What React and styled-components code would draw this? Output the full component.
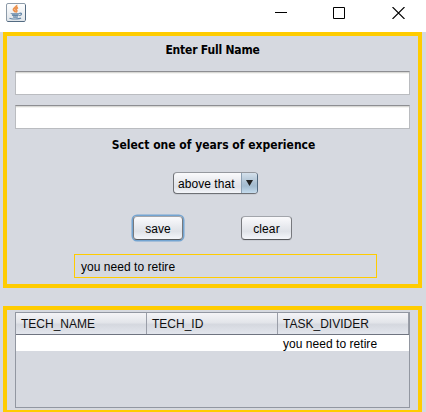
import React from 'react';
import styled, { createGlobalStyle } from 'styled-components';

const Global = createGlobalStyle`
  * { box-sizing: border-box; }
  body { margin: 0; background: #d6d9e0; overflow: hidden; }
`;

const Window = styled.div`
  width: 426px;
  height: 412px;
  overflow: hidden;
  background: #d6d9e0;
  color: #000;
  font: 12px/15px 'Liberation Sans', Arial, sans-serif;
  white-space: nowrap;
`;

const TitleBar = styled.header`
  height: 32px;
  padding: 3px 21px 0 6px;
  display: flex;
  justify-content: space-between;
  background: #fff;
`;

const Controls = styled.div`
  display: flex;
  gap: 46px;
  padding-top: 4px;
  svg { display: block; }
`;

const Panel = styled.section`
  width: 419px;
  height: ${(p) => p.$height}px;
  margin: 0 0 18px 3px;
  padding: ${(p) => p.$top}px 8px 0;
  border: 4px solid #fc0;
  display: flex;
  flex-direction: column;
  align-items: center;
`;

const Label = styled.label`
  height: 15px;
  font: bold 12px/15px 'DejaVu Sans Condensed', 'DejaVu Sans', sans-serif;
  font-stretch: condensed;
  letter-spacing: -0.2px;
`;

const ExperienceLabel = styled(Label)`
  margin: 9px 0 0 2px;
  letter-spacing: 0;
`;

const Field = styled.input`
  width: 395px;
  height: 24px;
  margin: ${(p) => p.$top}px 0 0;
  padding: 0 6px;
  flex: none;
  border: 1px solid #babcc0;
  border-top-color: #8d8e92;
  border-radius: 0;
  background: linear-gradient(#d8d8d5 0 1px, #f4f4f2 1px 2px, #fff 2px);
  font: inherit;
  outline: none;
`;

const Combo = styled.button`
  width: 85px;
  height: 22px;
  margin: 19px 0 0 6px;
  padding: 0;
  display: flex;
  flex: none;
  overflow: hidden;
  border: 1px solid #6e7075;
  border-top-color: #95989e;
  border-right-color: #526a80;
  border-radius: 4px;
  background: linear-gradient(#fafafc, #e6e8ed 50%, #dfe2e8 70%, #f4f6fa);
  color: #000;
  font: inherit;
  box-shadow: 0 1px 0 #c9ccd3;
`;

const ComboText = styled.span`
  width: 67px;
  padding: 4px 0 0 4px;
  text-align: left;
  letter-spacing: 0.05px;
`;

const ComboArrow = styled.span`
  width: 16px;
  height: 20px;
  padding: 7px 0 0 4px;
  border-left: 1px solid #8ca0b3;
  background: linear-gradient(#d5e1ec, #abc0d2 50%, #a3bbcf 65%, #c5dcee);
  svg { display: block; }
`;

const Buttons = styled.div`
  display: flex;
  gap: 58px;
  margin-top: 22px;
`;

const Button = styled.button`
  width: ${(p) => p.$width}px;
  height: 24px;
  padding: 2px 0 0;
  border: 1px solid #77797e;
  border-top-color: #a2a5ab;
  border-bottom-color: #55575b;
  border-radius: 4px;
  background: linear-gradient(#fafafc, #e7e9ee 45%, #dfe2e8 65%, #f4f6fa);
  color: #000;
  font: inherit;
  letter-spacing: 0.1px;
  box-shadow: ${(p) => (p.$focused ? '0 0 0 1.5px #73a4d1' : '0 1px 0 #c9ccd3')};
`;

const Result = styled.output`
  width: 303px;
  height: 24px;
  margin: 14px 0 0 26px;
  padding: 5px 6px 0;
  border: 1px solid #fc0;
  letter-spacing: 0.04px;
`;

const Table = styled.div`
  width: 395px;
  height: 96px;
  flex: none;
  border: 1px solid #9297a1;
`;

const Row = styled.div`
  display: grid;
  grid-template-columns: 131px 131px 131px;
`;

const HeaderRow = styled(Row)`
  height: 22px;
  border-bottom: 1px solid #6f7480;
  background: linear-gradient(#f4f4f7, #e3e5ea 45%, #d5d8df 55%, #e3e6ed);
`;

const HeaderCell = styled.div`
  padding: 4px 0 0 5px;
  border-right: 1px solid #9a9ea8;
  color: #111;
`;

const DataRow = styled(Row)`
  height: 16px;
  background: #fff;
`;

const Cell = styled.div`
  padding: 2px 0 0 5px;
  line-height: 14px;
  letter-spacing: 0.04px;
`;

const JavaIcon = () => (
  <svg width="20" height="19" viewBox="0 0 20 19" fill="none">
    <defs>
      <linearGradient id="tile" x1="0" y1="0" x2="0" y2="1">
        <stop offset="0" stopColor="#fff" />
        <stop offset="1" stopColor="#dfe4e9" />
      </linearGradient>
    </defs>
    <rect x=".5" y=".5" width="19" height="18" rx="1.5" fill="url(#tile)" stroke="#8d9ba9" />
    <path d="M1.5 18.5h17M19.5 2v15" stroke="#536b82" />
    <path d="M10.500 2c1 2-3 2.800-3 4.500 0 1.300 1.800 1.700 2 2.800M12 4.500c-2 .8-2.500 1.600-1.700 2.400.8.8.5 1.600-.3 2.300" stroke="#ec9350" strokeWidth="1.900" />
    <path d="M5 10.300c0 1 8.500 1 8.500 0M6 12.200c2 .5 5 .5 6.700 0M7 13.800c1.500.3 3.500.3 5 0M13.500 10.300c3-.6 2.500 1.900-.3 2.300M3.500 15c1 1.300 10 1.300 11.500 0" stroke="#6487a8" strokeWidth="1.200" />
  </svg>
);

export default function App() {
  return (
    <Window>
      <Global />
      <TitleBar>
        <JavaIcon />
        <Controls>
          <svg width="12" height="12" stroke="#000"><path d="M0 5.500h12" /></svg>
          <svg width="12" height="12" fill="none" stroke="#000"><path d="M.5.5h11v11H.5z" /></svg>
          <svg width="14" height="12" stroke="#000" strokeWidth="1.100"><path d="M1.500 0l12 12M13.500 0l-12 12" /></svg>
        </Controls>
      </TitleBar>
      <Panel $height={256} $top={7}>
        <Label>Enter Full Name</Label>
        <Field $top={13} />
        <Field $top={10} />
        <ExperienceLabel>Select one of years of experience</ExperienceLabel>
        <Combo>
          <ComboText>above that</ComboText>
          <ComboArrow>
            <svg width="7" height="6" fill="#222"><path d="M0 0h7L3.500 6z" /></svg>
          </ComboArrow>
        </Combo>
        <Buttons>
          <Button $width={50} $focused>save</Button>
          <Button $width={51}>clear</Button>
        </Buttons>
        <Result>you need to retire</Result>
      </Panel>
      <Panel $height={108} $top={2}>
        <Table>
          <HeaderRow>
            <HeaderCell>TECH_NAME</HeaderCell>
            <HeaderCell>TECH_ID</HeaderCell>
            <HeaderCell>TASK_DIVIDER</HeaderCell>
          </HeaderRow>
          <DataRow>
            <Cell />
            <Cell />
            <Cell>you need to retire</Cell>
          </DataRow>
        </Table>
      </Panel>
    </Window>
  );
}
